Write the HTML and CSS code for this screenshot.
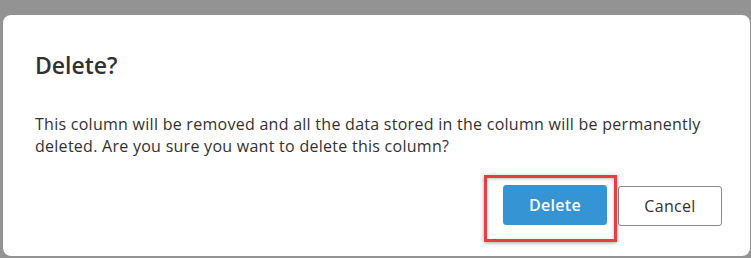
FILE: index.html
```html
<!DOCTYPE html>
<html>
<head>
<meta charset="utf-8">
<link rel="stylesheet" href="styles.css">
</head>
<body>
<div class="dialog">
  <h1 class="title">Delete?</h1>
  <p class="message">This column will be removed and all the data stored in the column will be permanently deleted. Are you sure you want to delete this column?</p>
  <div class="actions">
    <div class="btn-wrap">
      <button class="btn btn-primary">Delete</button>
      <span class="highlight"></span>
    </div>
    <button class="btn btn-secondary">Cancel</button>
  </div>
</div>
</body>
</html>
```
FILE: styles.css
```css
html, body {
  margin: 0;
  height: 100%;
}
body {
  background: #939393;
  padding: 15px 1px 2px 3px;
  box-sizing: border-box;
  font-family: "Open Sans", "Noto Sans", sans-serif;
  color: #323130;
  overflow: hidden;
}
.dialog {
  background: #fff;
  border-radius: 8px;
  height: 241px;
  box-sizing: border-box;
  padding: 34px 28px 0 32px;
}
.title {
  margin: 0;
  font-size: 23px;
  font-weight: 600;
  line-height: 32px;
}
.message {
  margin: 32px 0 0;
  font-size: 16px;
  letter-spacing: 0.27px;
  line-height: 22px;
  padding-right: 10px;
}
.actions {
  display: flex;
  justify-content: flex-end;
  gap: 11px;
  margin-top: 28px;
}
.btn-wrap {
  position: relative;
}
.btn {
  display: block;
  width: 104px;
  height: 40px;
  border-radius: 3px;
  font-family: "Open Sans", "Noto Sans", sans-serif;
  font-size: 16px;
  letter-spacing: 0.3px;
  font-weight: 600;
  cursor: pointer;
}
.btn-primary {
  background: #3594d4;
  color: #fff;
  border: 1px solid #3594d4;
}
.btn-secondary {
  background: #fff;
  color: #323130;
  border: 1px solid #8a8a8a;
  font-weight: 400;
  margin-top: 1px;
}
.highlight {
  position: absolute;
  left: -19px;
  top: -10px;
  width: 133px;
  height: 67px;
  box-sizing: border-box;
  border: 3px solid #ee3b43;
  box-shadow: 0 1px 4px rgba(0,0,0,0.35), inset 0 1px 3px rgba(0,0,0,0.25);
  pointer-events: none;
}
```
